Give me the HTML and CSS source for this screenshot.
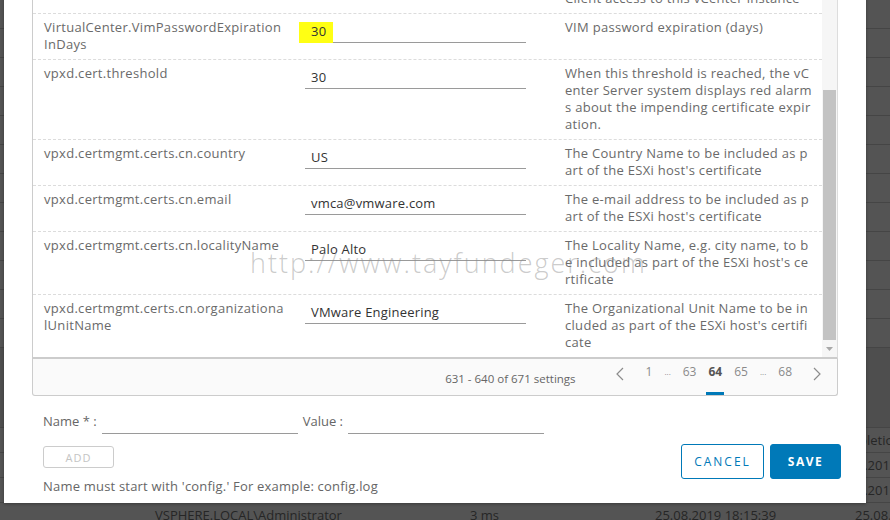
FILE: index.html
```html
<!DOCTYPE html>
<html lang="en">
<head>
  <meta charset="UTF-8" />
  <meta name="viewport" content="width=device-width, initial-scale=1.0" />
  <title>Edit Advanced vCenter Server Settings</title>
  <link rel="stylesheet" href="styles.css">
</head>
<body>
  <div class="page">
    <!-- dimmed page behind the dialog -->
    <div class="bg-page">
      <div class="bg-row"></div>
      <div class="bg-row"></div>
      <div class="bg-row"></div>
      <div class="bg-row"></div>
      <div class="bg-row"></div>
      <div class="bg-row"></div>
      <div class="bg-row"></div>
      <div class="bg-row"></div>
      <div class="bg-row"></div>
      <div class="bg-row"></div>
      <div class="bg-row"></div>
      <div class="bg-row"></div>
      <div class="bg-band"></div>
      <div class="bg-row bg-head">
        <span class="c1">Initiator</span>
        <span class="c2">Queued For</span>
        <span class="c3">Start Time</span>
        <span class="c4">Completion Time</span>
      </div>
      <div class="bg-row bg-data">
        <span class="c1">VSPHERE.LOCAL\Administrator</span>
        <span class="c2">4 ms</span>
        <span class="c3">25.08.2019 18:16:02</span>
        <span class="c4">25.08.2019 18:16:02</span>
      </div>
      <div class="bg-row bg-data">
        <span class="c1">VSPHERE.LOCAL\Administrator</span>
        <span class="c2">2 ms</span>
        <span class="c3">25.08.2019 18:15:51</span>
        <span class="c4">25.08.2019 18:15:51</span>
      </div>
      <div class="bg-row bg-data">
        <span class="c1">VSPHERE.LOCAL\Administrator</span>
        <span class="c2">3 ms</span>
        <span class="c3">25.08.2019 18:15:39</span>
        <span class="c4 last-col">25.08.2019 18:15:39</span>
      </div>
    </div>

    <div class="modal">
      <div class="grid">
        <div class="grid-rows">
          <div class="row">
            <div class="name">VirtualCenter.VimApiUrl</div>
            <div class="value"><div class="field">https://vc/sdk</div></div>
            <div class="desc">VIM API URL used for<br>Client access to this vCenter instance</div>
          </div>
          <div class="row">
            <div class="name">VirtualCenter.VimPasswordExpirationInDays</div>
            <div class="value"><div class="field"><span class="marker">30</span></div></div>
            <div class="desc">VIM password expiration (days)</div>
          </div>
          <div class="row">
            <div class="name">vpxd.cert.threshold</div>
            <div class="value"><div class="field">30</div></div>
            <div class="desc">When this threshold is reached, the vCenter Server system displays red alarms about the impending certificate expiration.</div>
          </div>
          <div class="row">
            <div class="name">vpxd.certmgmt.certs.cn.country</div>
            <div class="value"><div class="field">US</div></div>
            <div class="desc">The Country Name to be included as part of the ESXi host's certificate</div>
          </div>
          <div class="row">
            <div class="name">vpxd.certmgmt.certs.cn.email</div>
            <div class="value"><div class="field">vmca@vmware.com</div></div>
            <div class="desc">The e-mail address to be included as part of the ESXi host's certificate</div>
          </div>
          <div class="row">
            <div class="name">vpxd.certmgmt.certs.cn.localityName</div>
            <div class="value"><div class="field">Palo Alto</div></div>
            <div class="desc">The Locality Name, e.g. city name, to be included as part of the ESXi host's certificate</div>
          </div>
          <div class="row last">
            <div class="name">vpxd.certmgmt.certs.cn.organizationalUnitName</div>
            <div class="value"><div class="field">VMware Engineering</div></div>
            <div class="desc">The Organizational Unit Name to be included as part of the ESXi host's certificate</div>
          </div>
        </div>
        <div class="scrollbar">
          <div class="thumb"></div>
          <svg class="scroll-down" width="13" height="8" viewBox="0 0 13 8"><polygon points="3,2 10,2 6.5,6" fill="#a8a8a8"/></svg>
        </div>
      </div>

      <div class="grid-foot">
        <span class="count">631 - 640 of 671 settings</span>
        <div class="pager">
          <span class="pg-arrow pg-prev">
            <svg width="8" height="14" viewBox="0 0 8 14"><polyline points="7,1 1,7 7,13" fill="none" stroke="#8c8c8c" stroke-width="1.2"/></svg>
          </span>
          <span class="pg">1</span>
          <span class="pg dots">...</span>
          <span class="pg">63</span>
          <span class="pg active">64</span>
          <span class="pg">65</span>
          <span class="pg dots">...</span>
          <span class="pg">68</span>
          <span class="pg-arrow pg-next">
            <svg width="8" height="14" viewBox="0 0 8 14"><polyline points="1,1 7,7 1,13" fill="none" stroke="#8c8c8c" stroke-width="1.2"/></svg>
          </span>
        </div>
      </div>

      <div class="modal-foot">
        <div class="add-form">
          <div class="form-row">
            <label for="newName">Name * :</label>
            <input type="text" id="newName" />
            <label for="newValue">Value :</label>
            <input type="text" id="newValue" />
          </div>
          <button class="btn-add" disabled>ADD</button>
          <p class="hint">Name must start with 'config.' For example: config.log</p>
        </div>
        <div class="actions">
          <button class="btn btn-outline">CANCEL</button>
          <button class="btn btn-primary">SAVE</button>
        </div>
      </div>
    </div>

    <div class="watermark">http://www.tayfundeger.com</div>
  </div>
</body>
</html>
```

FILE: styles.css
```css
body {
  margin: 0;
  font-family: "Open Sans", "Liberation Sans", sans-serif;
  background-color: #545454;
  overflow: hidden;
}
.page {
  position: relative;
  height: 520px;
  overflow: hidden;
}

/* background page */
.bg-page {
  display: flex;
  flex-direction: column;
}
.bg-row {
  height: 29px;
  border-bottom: 1px solid #454545;
  box-sizing: border-box;
  position: relative;
  font-size: 13px;
  color: #262626;
}
.bg-band {
  height: 80px;
  background-color: #4e4e4e;
  border-bottom: 1px solid #454545;
  box-sizing: border-box;
}
.bg-head,
.bg-data {
  height: 25px;
  line-height: 25px;
}
.bg-row span {
  position: absolute;
  top: 0;
  white-space: nowrap;
}
.bg-row .c1 { left: 155px; }
.bg-row .c2 { left: 470px; }
.bg-row .c3 { left: 655px; }
.bg-row .c4 { left: 831px; }
.bg-row .c4.last-col { left: 855px; }

/* dialog */
.modal {
  position: absolute;
  left: 4px;
  top: -32px;
  width: 862px;
  height: 535px;
  background: #fff;
  padding: 0 28px;
  box-sizing: border-box;
  box-shadow: 0 1px 3px rgba(0,0,0,0.3);
}
.grid {
  display: flex;
  border-left: 1px solid #ccc;
  border-right: 1px solid #ddd;
  border-bottom: 2px solid #ccc;
}
.grid-rows {
  width: 789px;
}
.row {
  display: grid;
  grid-template-columns: 264px 256px 1fr;
  padding: 5px 0 6px;
  border-bottom: 1px dashed #dcdcdc;
  font-size: 13px;
  line-height: 17px;
  letter-spacing: 0.3px;
  color: #6a6a6a;
}
.row.last {
  border-bottom: none;
}
.name {
  padding: 0 13px 0 11px;
  word-break: break-all;
}
.desc {
  padding: 0 9.5px 0 12px;
  word-break: break-all;
}
.value {
  padding-left: 8px;
}
.field {
  width: 215px;
  height: 22px;
  padding-top: 1px;
  line-height: 23px;
  padding-left: 6px;
  border-bottom: 1px solid #9a9a9a;
  color: #333;
  letter-spacing: 0.2px;
}
.marker {
  background-color: #ffff14;
  margin-left: -12px;
  padding: 0 7px 3px 12px;
}
.scrollbar {
  width: 15px;
  background-color: #f6f6f6;
  display: flex;
  flex-direction: column;
  align-items: center;
}
.thumb {
  margin-top: 122px;
  width: 13px;
  height: 250px;
  background-color: #c3c3c3;
}
.scroll-down {
  margin-top: auto;
  margin-bottom: 4px;
}

/* grid footer */
.grid-foot {
  display: flex;
  justify-content: flex-end;
  align-items: center;
  height: 36px;
  background-color: #fafafa;
  border: 1px solid #ccc;
  border-top: none;
  border-radius: 0 0 3px 3px;
  padding-right: 10px;
  color: #666;
}
.count {
  margin-right: 34px;
  padding-top: 2px;
  font-size: 11.5px;
}
.pager {
  display: flex;
  align-self: stretch;
}
.pg {
  padding: 0 2px;
  margin: 0 4px;
  line-height: 26px;
  color: #8a8a8a;
  font-size: 12px;
  border-bottom: 3px solid transparent;
  height: 36px;
  box-sizing: border-box;
}
.pg.dots {
  font-size: 8px;
}
.pg.active {
  color: #555;
  font-weight: bold;
  border-bottom-color: #0079b8;
}
.pg-arrow {
  display: flex;
  align-items: center;
  justify-content: center;
  width: 20px;
  padding-bottom: 6px;
}
.pg-prev { margin-right: 10px; }
.pg-next { margin-left: 9px; }

/* add form and buttons */
.modal-foot {
  display: flex;
  justify-content: space-between;
  margin-top: 12px;
}
.add-form {
  margin-left: 11px;
}
.form-row {
  display: flex;
  height: 26px;
}
.form-row label {
  line-height: 26px;
  font-size: 13px;
  color: #666;
  margin-right: 5px;
}
.form-row input {
  width: 196px;
  height: 26px;
  border: none;
  border-bottom: 1px solid #9a9a9a;
  box-sizing: border-box;
  margin-right: 5px;
  font-family: inherit;
  font-size: 13px;
  outline: none;
}
.btn-add {
  display: block;
  margin-top: 12px;
  width: 71px;
  height: 22px;
  background: #fff;
  border: 1px solid #ccc;
  border-radius: 3px;
  color: #c4c4c4;
  font-family: inherit;
  font-size: 11px;
  letter-spacing: 1px;
}
.hint {
  margin: 10px 0 0;
  font-size: 13px;
  line-height: 17px;
  letter-spacing: 0.2px;
  color: #666;
}
.actions {
  display: flex;
  gap: 6px;
  padding-top: 36px;
  margin-right: -3px;
}
.btn {
  height: 35px;
  border-radius: 3px;
  font-family: inherit;
  font-size: 12px;
  letter-spacing: 2px;
  cursor: pointer;
}
.btn-outline {
  width: 83px;
  background: #fff;
  border: 1px solid #0079b8;
  color: #0079b8;
}
.btn-primary {
  width: 71px;
  background: #0079b8;
  border: 1px solid #0079b8;
  color: #fff;
  font-weight: bold;
  letter-spacing: 1.5px;
}

.watermark {
  position: absolute;
  left: 250px;
  top: 244px;
  font-size: 27px;
  font-weight: 300;
  color: rgba(140,140,140,0.45);
  white-space: nowrap;
  letter-spacing: 2px;
}
```
